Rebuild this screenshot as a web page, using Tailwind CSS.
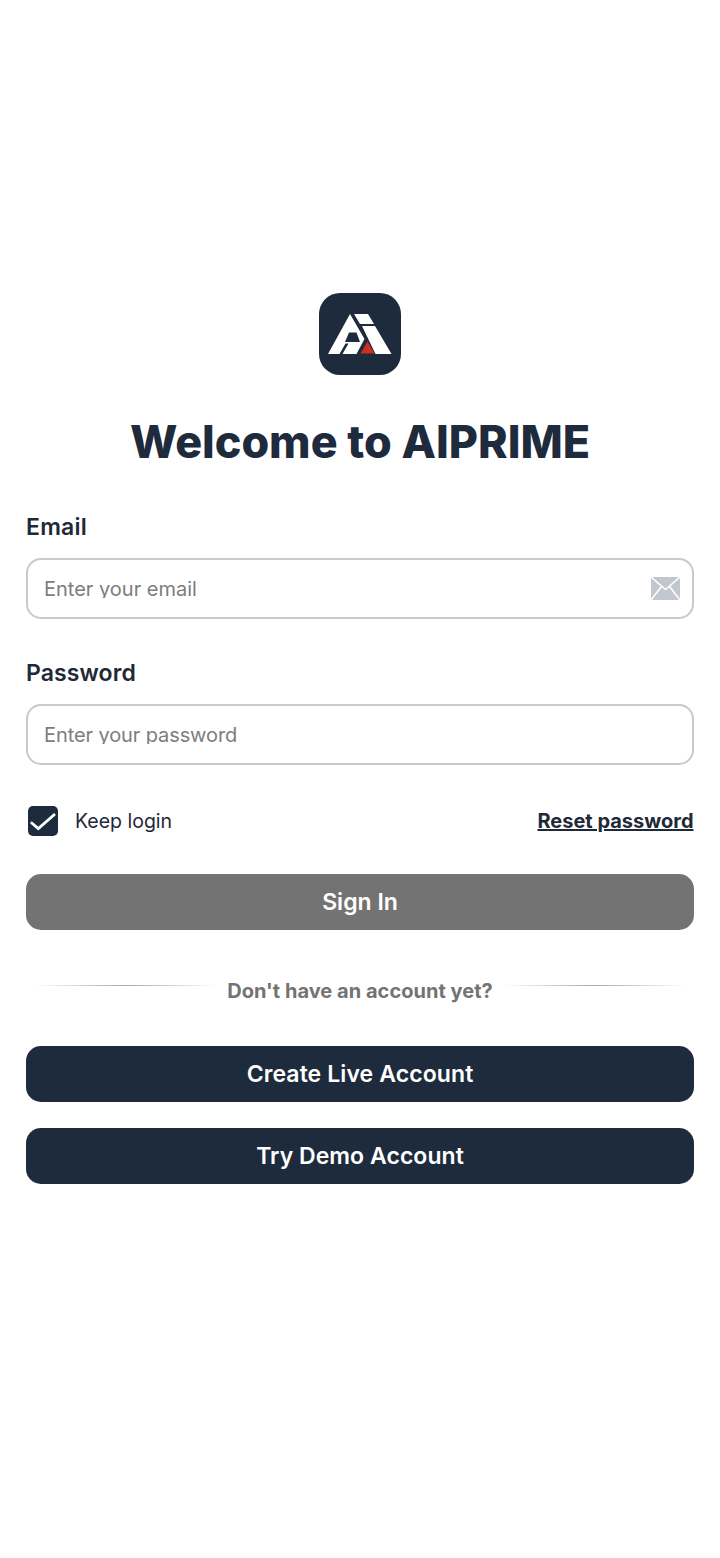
<!DOCTYPE html>
<html>
<head>
<meta charset="utf-8">
<script src="https://cdn.jsdelivr.net/npm/@tailwindcss/browser@4"></script>
</head>
<body class="bg-white font-['Inter',sans-serif]">
<div class="w-[720px] h-[1558px] overflow-hidden flex flex-col px-[26px] pt-[293px]">
  <div class="flex justify-center">
    <svg class="w-[82px] h-[82px]" viewBox="0 0 82 82">
      <rect width="82" height="82" rx="21" fill="#1e2b3c"/>
      <path d="M9 61 L31 21 L45.5 46 L37.5 61 L23.5 61 L29.5 50.5 L26.5 50.5 L20.5 61 Z" fill="#fff"/>
      <path d="M30 39.5 L37.5 39.5 L41 49 L26 49 Z" fill="#1e2b3c"/>
      <path d="M35 21 L49 21 L55 31 L41 31 Z" fill="#fff"/>
      <path d="M43 33 L56 33 L72.5 61 L56.5 61 Z" fill="#fff"/>
      <path d="M41.5 60.5 L48.5 48.5 L55.5 60.5 Z" fill="#c8321f"/>
    </svg>
  </div>
  <h1 class="mt-[40px] h-[54px] leading-[54px] text-center text-[44.8px] font-extrabold text-[#1e2b3c]">Welcome to AIPRIME</h1>

  <label class="mt-[43px] h-[30px] leading-[30px] text-[23px] font-semibold tracking-[0.2px] text-[#1f2937]">Email</label>
  <div class="mt-[16px] h-[61px] rounded-[15px] border-2 border-[#c9c9c9] flex items-center justify-between pl-[16px] pr-[12px]">
    <span class="block h-[19px] mb-[1px] leading-[20px] overflow-hidden text-[20px] text-[#7d7d7d]">Enter your email</span>
    <svg class="w-[29px] h-[23px]" viewBox="0 0 29 23">
      <rect width="29" height="23" fill="#c2c6cf"/>
      <path d="M0 0 L14.5 12.5 L29 0 M0 23 L10.5 9.5 M29 23 L18.5 9.5" fill="none" stroke="#fff" stroke-width="1.6"/>
    </svg>
  </div>

  <label class="mt-[39px] h-[30px] leading-[30px] text-[23px] font-semibold tracking-[0.1px] text-[#1f2937]">Password</label>
  <div class="mt-[16px] h-[61px] rounded-[15px] border-2 border-[#c9c9c9] flex items-center pl-[16px] pr-[12px]">
    <span class="block h-[19px] mb-[1px] leading-[20px] overflow-hidden text-[20px] text-[#7d7d7d] tracking-[-0.1px]">Enter your password</span>
  </div>

  <div class="mt-[41px] h-[30px] flex items-center justify-between">
    <div class="flex items-center pl-[2px] gap-[17px]">
      <div class="w-[30px] h-[30px] rounded-[5px] bg-[#1e2b3c] flex items-center justify-center">
        <svg class="w-[26px] h-[22px]" viewBox="0 0 26 22"><path d="M0.8 12.2 L8.3 18.6 L25 4" fill="none" stroke="#fff" stroke-width="2.8"/></svg>
      </div>
      <span class="relative top-[1px] text-[19.5px] text-[#1f2937]">Keep login</span>
    </div>
    <a class="mr-[0.5px] text-[20px] font-bold underline text-[#1f2937]">Reset password</a>
  </div>

  <button class="mt-[38px] h-[56px] rounded-[15px] bg-[#737373] text-white text-[23px] font-semibold">Sign In</button>

  <div class="mt-[47px] h-[28px] flex items-start justify-center gap-[10px]">
    <div class="mt-[8px] w-[184px] h-[1px] bg-gradient-to-r from-transparent via-[#a8a8a8] to-transparent"></div>
    <span class="leading-[28px] text-[20px] font-bold tracking-[0.03px] text-[#737373]">Don't have an account yet?</span>
    <div class="mt-[8px] w-[184px] h-[1px] bg-gradient-to-r from-transparent via-[#a8a8a8] to-transparent"></div>
  </div>

  <button class="mt-[41px] h-[56px] rounded-[15px] bg-[#1e2b3c] text-white text-[23px] font-semibold tracking-[0.1px]">Create Live Account</button>
  <button class="mt-[26px] h-[56px] rounded-[15px] bg-[#1e2b3c] text-white text-[23px] font-semibold tracking-[0.05px]">Try Demo Account</button>
</div>
</body>
</html>
